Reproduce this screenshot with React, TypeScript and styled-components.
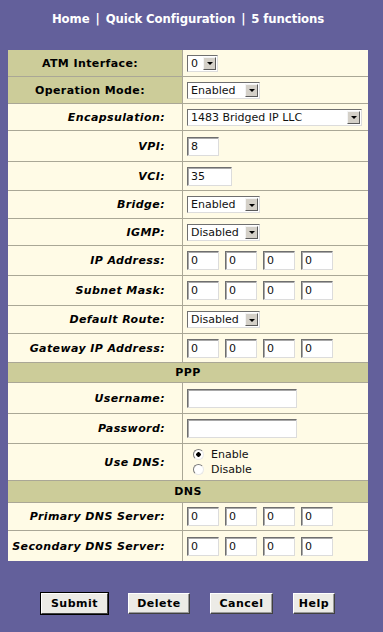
import React from 'react';
import styled, { createGlobalStyle } from 'styled-components';

const GlobalStyle = createGlobalStyle`
    html, body {
        margin: 0;
        padding: 0;
        background: #63609b;
    }
    body {
        font-family: 'DejaVu Sans', Verdana, sans-serif;
        width: 383px;
        height: 632px;
        overflow: hidden;
    }
`;

const Page = styled.div`
    display: flex;
    flex-direction: column;
    padding: 0 15px 0 8px;
`;

const NavBar = styled.div`
    height: 50px;
    box-sizing: border-box;
    padding-top: 11px;
    text-align: center;
    color: #ffffff;
    font-family: 'DejaVu Sans Condensed', 'DejaVu Sans', sans-serif;
    font-weight: bold;
    font-size: 13px;
    letter-spacing: -0.1px;
`;

const NavSep = styled.span`
    margin: 0 6px;
`;

const FormTable = styled.div`
    display: flex;
    flex-direction: column;
    width: 360px;
    background: #fffbe6;
`;

const Row = styled.div<{ $h: number }>`
    display: grid;
    grid-template-columns: 175px 1fr;
    height: ${(p) => p.$h}px;
    box-sizing: border-box;
    border-bottom: 1px solid #aaa796;
    &:last-child {
        border-bottom: none;
    }
`;

const Label = styled.div<{ $main?: boolean }>`
    display: flex;
    align-items: center;
    justify-content: ${(p) => (p.$main ? 'center' : 'flex-end')};
    padding-right: ${(p) => (p.$main ? '10px' : '17px')};
    background: ${(p) => (p.$main ? '#cccc99' : 'transparent')};
    border-right: 1px solid #aaa796;
    font-size: 11px;
    font-weight: bold;
    font-style: ${(p) => (p.$main ? 'normal' : 'italic')};
    letter-spacing: 0.4px;
    color: #000;
    white-space: nowrap;
`;

const Value = styled.div`
    display: flex;
    align-items: center;
    padding-left: 4px;
    gap: 6px;
`;

const SectionRow = styled.div<{ $h: number }>`
    display: flex;
    align-items: center;
    justify-content: center;
    height: ${(p) => p.$h}px;
    box-sizing: border-box;
    border-bottom: 1px solid #aaa796;
    background: #cccc99;
    font-size: 11px;
    font-weight: bold;
    letter-spacing: 0.4px;
    color: #000;
`;

const TextField = styled.div<{ $w: number }>`
    width: ${(p) => p.$w}px;
    height: 19px;
    box-sizing: border-box;
    border: 1px solid;
    border-color: #6f6f6f #dcdcdc #dcdcdc #6f6f6f;
    box-shadow: inset 1px 1px 0 #a9a9a9;
    background: #ffffff;
    padding: 2px 0 0 3px;
    font-size: 11px;
    color: #111;
`;

const SelectBox = styled.div<{ $w: number }>`
    display: flex;
    align-items: center;
    justify-content: space-between;
    width: ${(p) => p.$w}px;
    height: 17px;
    box-sizing: border-box;
    border: 1px solid;
    border-color: #6f6f6f #dcdcdc #dcdcdc #6f6f6f;
    background: #ffffff;
    padding: 0 1px 0 3px;
    font-size: 11px;
    color: #111;
`;

const ArrowButton = styled.div`
    display: flex;
    align-items: center;
    justify-content: center;
    width: 13px;
    height: 13px;
    box-sizing: border-box;
    background: #d4d0c8;
    border: 1px solid;
    border-color: #f4f4f4 #5a5a5a #5a5a5a #f4f4f4;
    &::after {
        content: '';
        border-left: 3px solid transparent;
        border-right: 3px solid transparent;
        border-top: 3px solid #000;
        margin-top: 1px;
    }
`;

const RadioGroup = styled.div`
    display: flex;
    flex-direction: column;
    gap: 1px;
    padding-left: 6px;
`;

const RadioLine = styled.div`
    display: flex;
    align-items: center;
    gap: 7px;
    font-size: 11px;
    color: #111;
    height: 14px;
`;

const RadioDot = styled.span<{ $on?: boolean }>`
    width: 11px;
    height: 11px;
    box-sizing: border-box;
    border-radius: 50%;
    border: 1px solid;
    border-color: #7a7a7a #e8e8e8 #e8e8e8 #7a7a7a;
    background: ${(p) =>
        p.$on ? 'radial-gradient(circle, #000 0 2px, #fff 2.5px)' : '#ffffff'};
`;

const ButtonBar = styled.div`
    display: flex;
    justify-content: center;
    gap: 20px;
    margin-top: 32px;
    width: 360px;
`;

const PlainButton = styled.button<{ $w: number; $default?: boolean }>`
    width: ${(p) => p.$w}px;
    height: 21px;
    padding: 0;
    box-sizing: border-box;
    background: #ecebe6;
    border: 1px solid;
    border-color: #ffffff #404040 #404040 #ffffff;
    box-shadow: ${(p) => (p.$default ? '0 0 0 1px #000' : 'inset -1px -1px 0 #9a9a9a')};
    font-family: 'DejaVu Sans', sans-serif;
    font-size: 11px;
    font-weight: bold;
    letter-spacing: 0.5px;
    color: #000;
`;

const Select: React.FC<{ value: string; width: number }> = ({ value, width }) => (
    <SelectBox $w={width}>
        <span>{value}</span>
        <ArrowButton />
    </SelectBox>
);

const IpFields: React.FC = () => (
    <>
        {[0, 1, 2, 3].map((i) => (
            <TextField key={i} $w={32}>
                0
            </TextField>
        ))}
    </>
);

const App: React.FC = () => {
    return (
        <>
            <GlobalStyle />
            <Page>
                <NavBar>
                    Home<NavSep>|</NavSep>Quick Configuration<NavSep>|</NavSep>5 functions
                </NavBar>
                <FormTable>
                    <Row $h={27}>
                        <Label $main>ATM Interface:</Label>
                        <Value>
                            <Select value="0" width={31} />
                        </Value>
                    </Row>
                    <Row $h={27}>
                        <Label $main>Operation Mode:</Label>
                        <Value>
                            <Select value="Enabled" width={73} />
                        </Value>
                    </Row>
                    <Row $h={27}>
                        <Label>Encapsulation:</Label>
                        <Value>
                            <Select value="1483 Bridged IP LLC" width={175} />
                        </Value>
                    </Row>
                    <Row $h={31}>
                        <Label>VPI:</Label>
                        <Value>
                            <TextField $w={32}>8</TextField>
                        </Value>
                    </Row>
                    <Row $h={29}>
                        <Label>VCI:</Label>
                        <Value>
                            <TextField $w={45}>35</TextField>
                        </Value>
                    </Row>
                    <Row $h={28}>
                        <Label>Bridge:</Label>
                        <Value>
                            <Select value="Enabled" width={73} />
                        </Value>
                    </Row>
                    <Row $h={27}>
                        <Label>IGMP:</Label>
                        <Value>
                            <Select value="Disabled" width={73} />
                        </Value>
                    </Row>
                    <Row $h={30}>
                        <Label>IP Address:</Label>
                        <Value>
                            <IpFields />
                        </Value>
                    </Row>
                    <Row $h={30}>
                        <Label>Subnet Mask:</Label>
                        <Value>
                            <IpFields />
                        </Value>
                    </Row>
                    <Row $h={28}>
                        <Label>Default Route:</Label>
                        <Value>
                            <Select value="Disabled" width={73} />
                        </Value>
                    </Row>
                    <Row $h={29}>
                        <Label>Gateway IP Address:</Label>
                        <Value>
                            <IpFields />
                        </Value>
                    </Row>
                    <SectionRow $h={20}>PPP</SectionRow>
                    <Row $h={31}>
                        <Label>Username:</Label>
                        <Value>
                            <TextField $w={110} />
                        </Value>
                    </Row>
                    <Row $h={30}>
                        <Label>Password:</Label>
                        <Value>
                            <TextField $w={110} />
                        </Value>
                    </Row>
                    <Row $h={37}>
                        <Label>Use DNS:</Label>
                        <Value>
                            <RadioGroup>
                                <RadioLine>
                                    <RadioDot $on />
                                    Enable
                                </RadioLine>
                                <RadioLine>
                                    <RadioDot />
                                    Disable
                                </RadioLine>
                            </RadioGroup>
                        </Value>
                    </Row>
                    <SectionRow $h={22}>DNS</SectionRow>
                    <Row $h={28}>
                        <Label>Primary DNS Server:</Label>
                        <Value>
                            <IpFields />
                        </Value>
                    </Row>
                    <Row $h={30}>
                        <Label>Secondary DNS Server:</Label>
                        <Value>
                            <IpFields />
                        </Value>
                    </Row>
                </FormTable>
                <ButtonBar>
                    <PlainButton $w={67} $default>
                        Submit
                    </PlainButton>
                    <PlainButton $w={62}>Delete</PlainButton>
                    <PlainButton $w={63}>Cancel</PlainButton>
                    <PlainButton $w={42}>Help</PlainButton>
                </ButtonBar>
            </Page>
        </>
    );
};

export default App;
